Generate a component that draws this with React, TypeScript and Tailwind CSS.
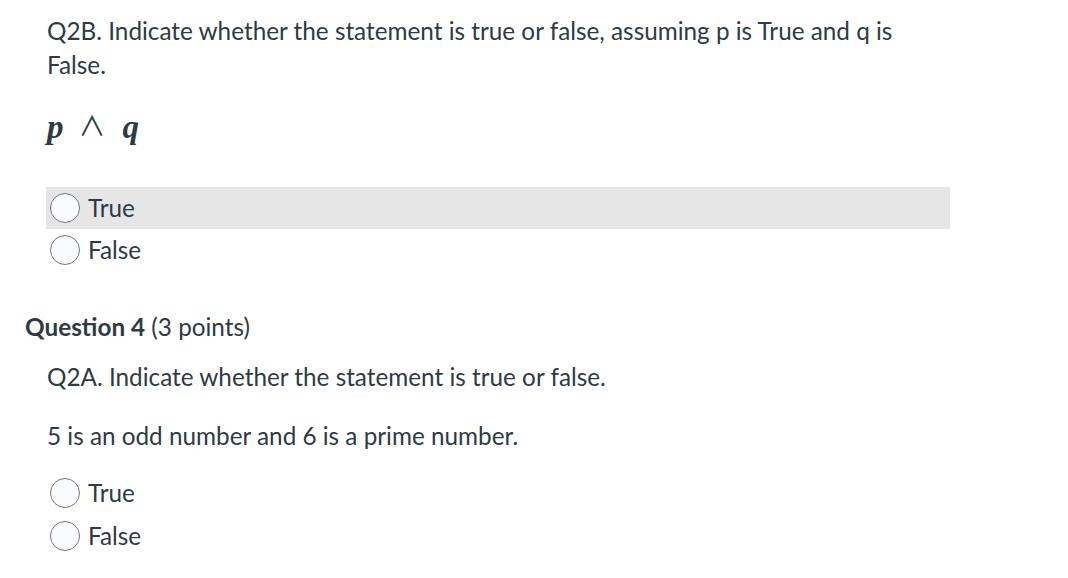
import React from "react";

function Radio() {
  return (
    <span className="inline-block w-[30px] h-[30px] rounded-full border border-[#767676] bg-[#f9fbff] shrink-0" />
  );
}

function Option({ label, highlighted, h }: { label: string; highlighted?: boolean; h: string }) {
  return (
    <div className={`flex items-center gap-[8px] pl-[4px] ${h} ${highlighted ? "bg-[#e6e6e6]" : ""}`}>
      <Radio />
      <span>{label}</span>
    </div>
  );
}

export default function App() {
  return (
    <div
      className="w-[1068px] h-[578px] overflow-hidden bg-white text-[#2d3b45] text-[24.3px] leading-[34px]"
      style={{ fontFamily: "Lato, 'Noto Sans', sans-serif" }}
    >
      <div className="pt-[14px] pl-[47px] w-[960px]">
        <p className="w-[880px]">
          Q2B. Indicate whether the statement is true or false, assuming p is True and q is False.
        </p>
        <div
          className="mt-[28px] h-[34px] text-[33px] leading-[34px] italic flex items-center"
          style={{ fontFamily: "'Liberation Serif', 'DejaVu Serif', serif" }}
        >
          <span className="font-bold">p</span>
          <span
            className="not-italic ml-[15px] mr-[17px] text-[27px] leading-[34px] font-normal -mt-[4px]"
            style={{ fontFamily: "'Noto Sans CJK JP', 'DejaVu Sans', sans-serif" }}
          >
            ∧
          </span>
          <span className="font-bold">q</span>
        </div>
      </div>
      <div className="mt-[43px] ml-[46px] w-[904px]">
        <Option label="True" highlighted h="h-[42px]" />
        <Option label="False" h="h-[42px]" />
      </div>
      <div className="mt-[39px] pl-[25px]">
        <span className="font-bold">Question 4</span> (3 points)
      </div>
      <div className="pl-[47px]">
        <p className="mt-[16px]">Q2A. Indicate whether the statement is true or false.</p>
        <p className="mt-[25px]">5 is an odd number and 6 is a prime number.</p>
      </div>
      <div className="mt-[19px] ml-[46px] w-[904px]">
        <Option label="True" h="h-[42px]" />
        <Option label="False" h="h-[44px]" />
      </div>
    </div>
  );
}
